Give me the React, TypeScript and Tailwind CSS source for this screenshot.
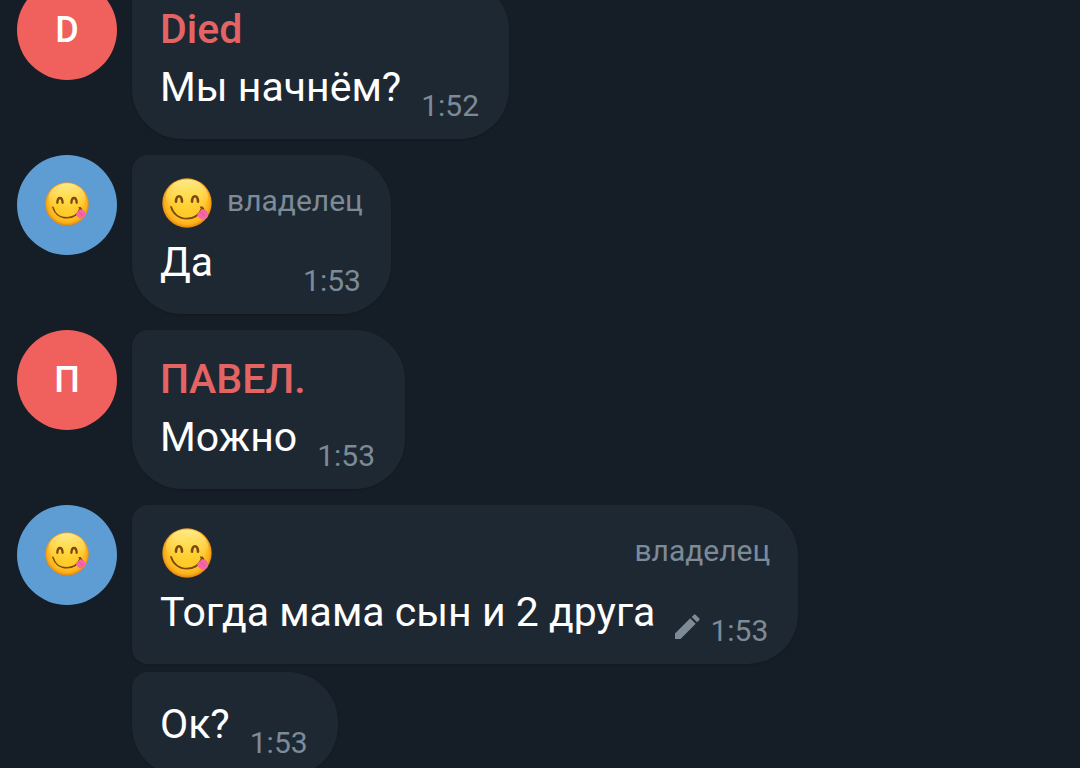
import { useId } from "react";

function YumFace({ className }: { className: string }) {
  const id = useId();
  const face = `${id}-face`;
  const glow = `${id}-glow`;
  return (
    <svg viewBox="0 0 50 50" role="img" aria-label="😋" className={className}>
      <defs>
        <radialGradient id={face} cx="0.5" cy="0.48" r="0.53">
          <stop offset="0" stopColor="#ffd534" />
          <stop offset="0.6" stopColor="#ffc928" />
          <stop offset="0.85" stopColor="#fdb01c" />
          <stop offset="1" stopColor="#d97b0c" />
        </radialGradient>
        <linearGradient id={glow} x1="0" y1="0" x2="0" y2="1">
          <stop offset="0" stopColor="#fff8a8" stopOpacity="0.8" />
          <stop offset="0.5" stopColor="#ffec78" stopOpacity="0.4" />
          <stop offset="1" stopColor="#ffb81c" stopOpacity="0" />
        </linearGradient>
      </defs>
      <circle cx="25" cy="25" r="24.7" fill={`url(#${face})`} />
      <ellipse cx="25" cy="19" rx="21" ry="17.5" fill={`url(#${glow})`} />
      <path
        d="M14 23.600c.3-7.200 5.700-7.200 6 0"
        fill="none"
        stroke="#7a4812"
        strokeWidth="2.600"
        strokeLinecap="round"
      />
      <path
        d="M30 23.600c.3-7.200 5.700-7.200 6 0"
        fill="none"
        stroke="#7a4812"
        strokeWidth="2.600"
        strokeLinecap="round"
      />
      <path
        d="M9 28.800c2 7 7.800 11.900 15.800 11.900 7.400 0 12.900-4.200 15.600-11.300"
        fill="none"
        stroke="#7a4812"
        strokeWidth="1.800"
        strokeLinecap="round"
      />
      <path
        d="M35 36.200 40.400 30.500c2.800.2 5.500 2.900 5.600 6.200.1 2.700-2.200 4.900-5 4.700-2.700-.2-5.200-2.200-6-5.200Z"
        fill="#f668a4"
      />
      <path d="m38.600 34.200 3.900 3.500" stroke="#e2508a" strokeWidth="1" strokeLinecap="round" />
      <path d="m38.800 29.200 2.600 1.500" stroke="#7a4812" strokeWidth="1.600" strokeLinecap="round" />
    </svg>
  );
}

function PencilIcon() {
  return (
    <svg viewBox="0 0 25 25" role="img" aria-label="изменено" className="mb-[10px] h-[25px] w-[25px]">
      <path
        fill="currentColor"
        d="M0 19.500 15.200 4.300l5.500 5.500L5.500 25H0ZM16.700 2.900l2.200-2.200a1.200 1.200 0 0 1 1.700 0l3.700 3.700a1.200 1.200 0 0 1 0 1.700l-2.200 2.200Z"
      />
    </svg>
  );
}

type Message = {
  text: string;
  time: string;
  edited?: boolean;
};

type Group = {
  name?: string;
  initial?: string;
  owner?: boolean;
  messages: Message[];
};

const groups: Group[] = [
  { name: "Died", initial: "D", messages: [{ text: "Мы начнём?", time: "1:52" }] },
  { owner: true, messages: [{ text: "Да", time: "1:53" }] },
  { name: "ПАВЕЛ.", initial: "П", messages: [{ text: "Можно", time: "1:53" }] },
  {
    owner: true,
    messages: [
      { text: "Тогда мама сын и 2 друга", time: "1:53", edited: true },
      { text: "Ок?", time: "1:53" },
    ],
  },
];

function Avatar({ group }: { group: Group }) {
  return (
    <div
      className={`flex size-[100px] shrink-0 items-center justify-center rounded-full ${
        group.owner ? "bg-[#5e9dd3]" : "bg-[#f0605d]"
      }`}
    >
      {group.owner ? (
        <YumFace className="mb-[2px] size-11" />
      ) : (
        <span className="text-[36px] leading-[42px] font-medium text-white">{group.initial}</span>
      )}
    </div>
  );
}

function Bubble({
  group,
  message,
  first,
  last,
}: {
  group: Group;
  message: Message;
  first: boolean;
  last: boolean;
}) {
  return (
    <article
      className={`flex w-fit flex-col gap-[10px] rounded-tl-[16px] rounded-r-[50px] bg-[#1e2833] pr-7 pb-[15px] pl-7 shadow-[0_1px_2px_rgba(0,0,0,0.15)] ${
        first ? "pt-[25px]" : "pt-7"
      } ${last ? "rounded-bl-[50px]" : "rounded-bl-[16px]"}`}
    >
      {first && (
        <header className="flex h-12 items-start justify-between gap-[15px]">
          {group.owner ? (
            <YumFace className="-mt-[2px] ml-[2px] size-[50px] shrink-0" />
          ) : (
            <h2 className="text-[41px] leading-[48px] font-medium text-[#e46464]">{group.name}</h2>
          )}
          {group.owner && (
            <span className="mt-[3px] text-[30px] leading-9 text-[#7c8b97]">владелец</span>
          )}
        </header>
      )}
      <div className="flex items-end justify-between gap-5 pr-[2px]">
        <p className="pb-[13px] text-[41px] leading-[48px] text-white">{message.text}</p>
        <div className="flex items-end gap-[10px] text-[#7c8b97]">
          {message.edited && <PencilIcon />}
          <time className="text-[30px] leading-9">{message.time}</time>
        </div>
      </div>
    </article>
  );
}

export default function App() {
  return (
    <main className="h-screen overflow-hidden bg-[#151d26] font-[Roboto,sans-serif]">
      <div className="-mt-5 flex flex-col gap-4 px-[17px]">
        {groups.map((group, index) => (
          <section key={index} className="flex items-start gap-[15px]">
            <Avatar group={group} />
            <div className="flex min-w-0 flex-col gap-2">
              {group.messages.map((message, i) => (
                <Bubble
                  key={message.text}
                  group={group}
                  message={message}
                  first={i === 0}
                  last={i === group.messages.length - 1}
                />
              ))}
            </div>
          </section>
        ))}
      </div>
    </main>
  );
}
